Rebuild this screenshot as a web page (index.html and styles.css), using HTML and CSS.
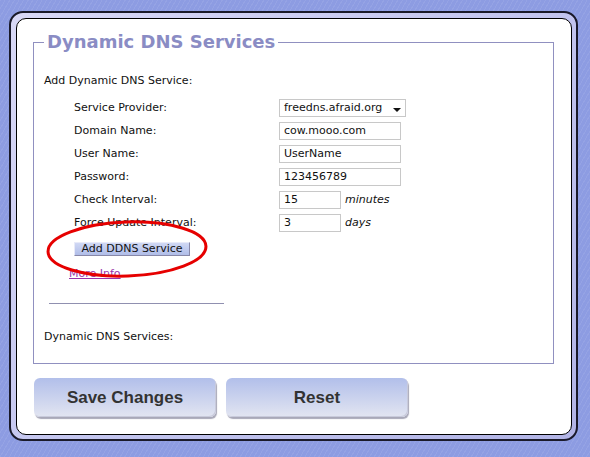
FILE: index.html
```html
<!DOCTYPE html>
<html>
<head>
<meta charset="utf-8">
<link rel="stylesheet" href="styles.css">
</head>
<body>
<div class="frame">
  <div class="inner">
    <fieldset class="group">
      <legend class="title">Dynamic DNS Services</legend>
      <div class="section-label">Add Dynamic DNS Service:</div>
      <div class="form">
        <div class="label">Service Provider:</div>
        <div class="field"><div class="select">freedns.afraid.org<span class="arrow"></span></div></div>
        <div class="label">Domain Name:</div>
        <div class="field"><div class="input wide">cow.mooo.com</div></div>
        <div class="label">User Name:</div>
        <div class="field"><div class="input wide">UserName</div></div>
        <div class="label">Password:</div>
        <div class="field"><div class="input wide">123456789</div></div>
        <div class="label">Check Interval:</div>
        <div class="field"><div class="input short">15</div><span class="unit">minutes</span></div>
        <div class="label">Force Update Interval:</div>
        <div class="field"><div class="input short">3</div><span class="unit">days</span></div>
      </div>
      <div class="add-row"><span class="add-btn">Add DDNS Service</span></div>
      <div class="more"><a class="more-link" href="#">More Info</a></div>
      <div class="rule"></div>
      <div class="list-label">Dynamic DNS Services:</div>
    </fieldset>
    <div class="actions">
      <div class="big-btn">Save Changes</div>
      <div class="big-btn">Reset</div>
    </div>
  </div>
</div>
<svg class="circle" width="590" height="457" viewBox="0 0 590 457">
  <ellipse cx="127" cy="249" rx="79" ry="27" fill="none" stroke="#e60000" stroke-width="3" transform="rotate(-2 127 249)"/>
</svg>
</body>
</html>
```
FILE: styles.css
```css
html, body {
  margin: 0;
  padding: 0;
}
body {
  width: 590px;
  height: 457px;
  overflow: hidden;
  position: relative;
  background-color: #8d9ce2;
  background-image: repeating-linear-gradient(120deg, rgba(255,255,255,0.07) 0px, rgba(255,255,255,0.07) 1px, rgba(0,0,0,0) 1px, rgba(0,0,0,0) 4px);
  font-family: "DejaVu Sans", Verdana, sans-serif;
  font-size: 11px;
  color: #111;
}
.frame {
  position: relative;
  margin: 11px 0 0 9px;
  width: 556px;
  height: 417px;
  border: 2px solid #1a1a2a;
  border-radius: 14px;
  padding: 5px 4px 4px 5px;
  background: linear-gradient(135deg, #d8d8f6 0%, #c4c6ef 50%, #b2b4e6 100%);
}
.inner {
  box-sizing: border-box;
  width: 100%;
  height: 100%;
  border: 1px solid #000;
  border-radius: 10px;
  background: #fff;
  padding-top: 12px;
}
.group {
  margin: 0 17px 0 16px;
  padding: 0 0 0 10px;
  border: 1px solid #9090c0;
  height: 333px;
  box-sizing: border-box;
}
.title {
  font-weight: bold;
  font-size: 18px;
  color: #8a8cc4;
  padding: 0 3px;
  line-height: 22px;
}
.section-label {
  margin-top: 21px;
  height: 14px;
}
.form {
  display: grid;
  grid-template-columns: 205px auto;
  grid-auto-rows: 23px;
  margin-top: 8px;
  margin-left: 30px;
}
.label {
  display: flex;
  align-items: center;
}
.field {
  display: flex;
  align-items: center;
}
.select, .input {
  box-sizing: border-box;
  height: 18px;
  border: 1px solid #c8c8c8;
  padding: 0 0 0 4px;
  display: flex;
  align-items: center;
  font-size: 11px;
}
.select {
  width: 127px;
  position: relative;
}
.arrow {
  position: absolute;
  right: 4px;
  top: 8px;
  width: 0;
  height: 0;
  border-left: 4px solid transparent;
  border-right: 4px solid transparent;
  border-top: 4px solid #111;
}
.wide { width: 122px; }
.short { width: 62px; }
.unit {
  font-style: italic;
  margin-left: 4px;
}
.add-row {
  margin: 8px 0 0 30px;
  height: 15px;
}
.add-btn {
  display: inline-block;
  box-sizing: border-box;
  width: 116px;
  height: 14px;
  line-height: 12px;
  text-align: center;
  border: 1px solid #8888a8;
  border-top-color: #e8eaf8;
  border-left-color: #e8eaf8;
  background: linear-gradient(#d0d8f4, #b0bde8);
}
.more {
  margin: 9px 0 0 25px;
  height: 16px;
  line-height: 16px;
}
.more-link {
  color: #9933aa;
  text-decoration: underline;
}
.rule {
  margin: 21px 0 0 5px;
  width: 175px;
  height: 1px;
  background: #9090b0;
}
.list-label {
  margin-top: 26px;
}
.actions {
  display: flex;
  gap: 10px;
  margin: 14px 0 0 17px;
}
.big-btn {
  box-sizing: border-box;
  width: 182px;
  height: 39px;
  border-radius: 6px;
  background: linear-gradient(#b2bfea, #e2e5f1);
  box-shadow: 1px 2px 1px #a8a8b8, inset -1px -1px 0 #c8cadb;
  display: flex;
  align-items: center;
  justify-content: center;
  font-family: "Liberation Sans", Arial, sans-serif;
  font-weight: bold;
  font-size: 17px;
  color: #333;
}
.circle {
  position: absolute;
  left: 0;
  top: 0;
  pointer-events: none;
}
```
